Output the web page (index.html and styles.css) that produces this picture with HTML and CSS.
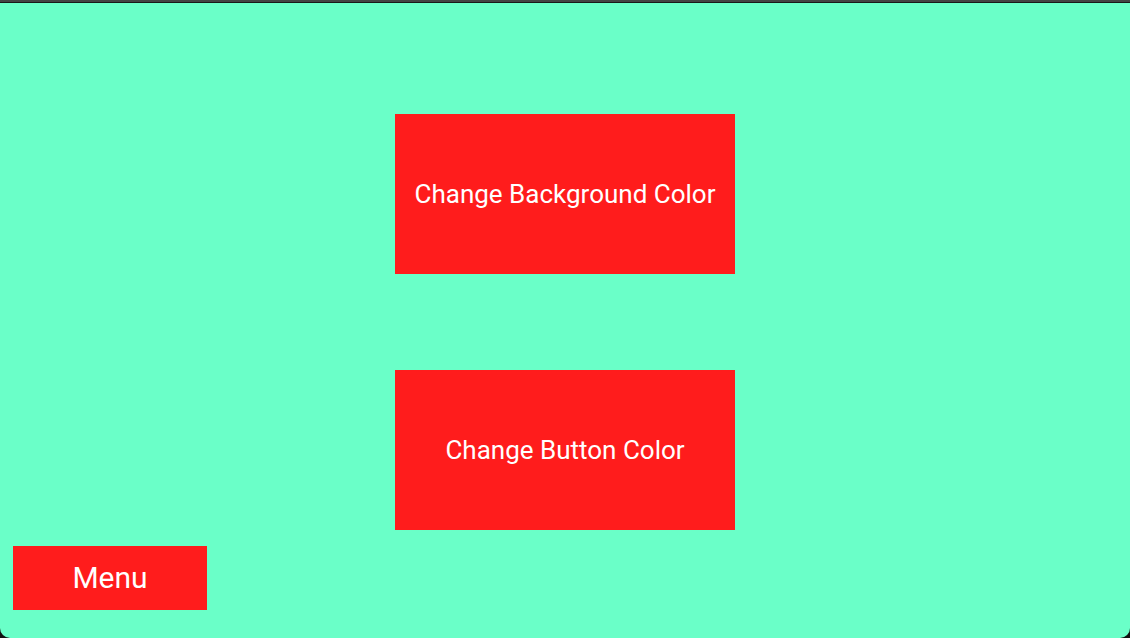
FILE: index.html
```html
<!DOCTYPE html>
<html>
<head>
<meta charset="utf-8">
<link rel="stylesheet" href="styles.css">
</head>
<body>
<div class="window">
  <div class="titlebar"></div>
  <main class="screen">
    <div class="actions">
      <button class="btn btn-large">Change Background Color</button>
      <button class="btn btn-large">Change Button Color</button>
    </div>
    <div class="footer">
      <button class="btn btn-menu">Menu</button>
    </div>
  </main>
</div>
</body>
</html>
```
FILE: styles.css
```css
html, body {
  margin: 0;
  padding: 0;
  background: #111111;
  width: 1130px;
  height: 638px;
  overflow: hidden;
}
.window {
  width: 1130px;
  height: 638px;
  display: flex;
  flex-direction: column;
}
.titlebar {
  height: 2px;
  background: #444444;
  border-bottom: 1px solid #1a1a1a;
}
.screen {
  flex: 1;
  background: #6affc8;
  border-radius: 0 0 10px 10px;
  padding: 111px 0 0;
  display: flex;
  flex-direction: column;
}
.actions {
  display: flex;
  flex-direction: column;
  align-items: center;
  gap: 96px;
}
.btn {
  border: none;
  margin: 0;
  padding: 0;
  background: #ff1c1c;
  color: #ffffff;
  font-family: Roboto, "Liberation Sans", sans-serif;
  cursor: pointer;
}
.btn-large {
  width: 340px;
  height: 160px;
  font-size: 26px;
}
.footer {
  padding: 16px 0 0 13px;
}
.btn-menu {
  width: 194px;
  height: 64px;
  font-size: 30px;
  padding-bottom: 2px;
}
```
